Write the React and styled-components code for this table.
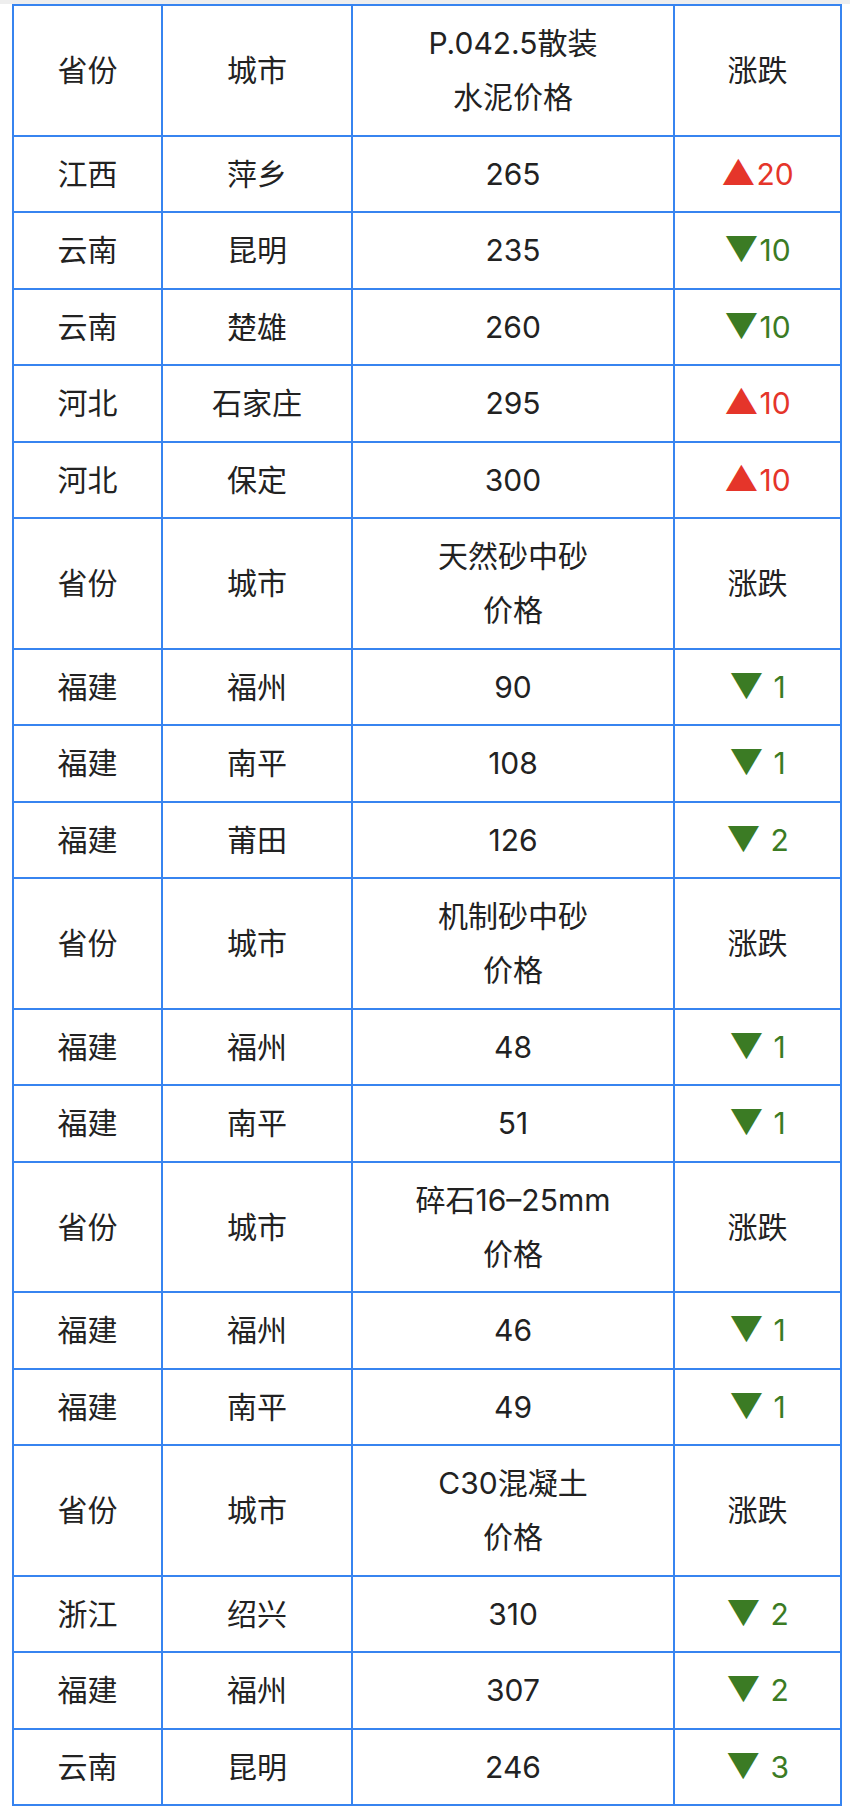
import React from 'react';
import styled, { createGlobalStyle } from 'styled-components';

const GlobalStyle = createGlobalStyle`
  body {
    margin: 0;
    background: #ffffff;
  }
`;

const Page = styled.div`
  width: 850px;
  font-family: Inter, "Noto Sans CJK SC", sans-serif;
  color: #222222;
`;

const TopStrip = styled.div`
  height: 4px;
  background: #eeeeee;
`;

const Table = styled.table`
  margin-left: 12px;
  width: 830px;
  border-collapse: collapse;
  table-layout: fixed;
`;

const Col = styled.col`
  width: ${(p) => p.$w}px;
`;

const Row = styled.tr`
  height: ${(p) => (p.$head ? '130.5px' : '76.5px')};
`;

const Cell = styled.td`
  border: 2px solid #3784f0;
  padding: 0;
  text-align: center;
  vertical-align: middle;
  font-size: 30px;
  line-height: 54px;
`;

const Change = styled.span`
  color: ${(p) => (p.$up ? '#e5352a' : '#3b7b24')};
`;

const Marker = styled.span`
  font-size: 34px;
  line-height: 0;
  margin-right: ${(p) => (p.$spaced ? '10px' : '1px')};
`;

const sections = [
  {
    title: ['P.042.5散装', '水泥价格'],
    rows: [
      ['江西', '萍乡', '265', '▲', '20', false],
      ['云南', '昆明', '235', '▼', '10', false],
      ['云南', '楚雄', '260', '▼', '10', false],
      ['河北', '石家庄', '295', '▲', '10', false],
      ['河北', '保定', '300', '▲', '10', false],
    ],
  },
  {
    title: ['天然砂中砂', '价格'],
    rows: [
      ['福建', '福州', '90', '▼', '1', true],
      ['福建', '南平', '108', '▼', '1', true],
      ['福建', '莆田', '126', '▼', '2', true],
    ],
  },
  {
    title: ['机制砂中砂', '价格'],
    rows: [
      ['福建', '福州', '48', '▼', '1', true],
      ['福建', '南平', '51', '▼', '1', true],
    ],
  },
  {
    title: ['碎石16–25mm', '价格'],
    rows: [
      ['福建', '福州', '46', '▼', '1', true],
      ['福建', '南平', '49', '▼', '1', true],
    ],
  },
  {
    title: ['C30混凝土', '价格'],
    rows: [
      ['浙江', '绍兴', '310', '▼', '2', true],
      ['福建', '福州', '307', '▼', '2', true],
      ['云南', '昆明', '246', '▼', '3', true],
    ],
  },
];

const App = () => (
  <Page>
    <GlobalStyle />
    <TopStrip />
    <Table>
      <colgroup>
        <Col $w={149} />
        <Col $w={190} />
        <Col $w={322} />
        <Col $w={167} />
      </colgroup>
      <tbody>
        {sections.map((s, i) => (
          <React.Fragment key={i}>
            <Row $head>
              <Cell>省份</Cell>
              <Cell>城市</Cell>
              <Cell>
                {s.title[0]}
                <br />
                {s.title[1]}
              </Cell>
              <Cell>涨跌</Cell>
            </Row>
            {s.rows.map((r, j) => (
              <Row key={j}>
                <Cell>{r[0]}</Cell>
                <Cell>{r[1]}</Cell>
                <Cell>{r[2]}</Cell>
                <Cell>
                  <Change $up={r[3] === '▲'}>
                    <Marker $spaced={r[5]}>{r[3]}</Marker>
                    {r[4]}
                  </Change>
                </Cell>
              </Row>
            ))}
          </React.Fragment>
        ))}
      </tbody>
    </Table>
  </Page>
);

export default App;
